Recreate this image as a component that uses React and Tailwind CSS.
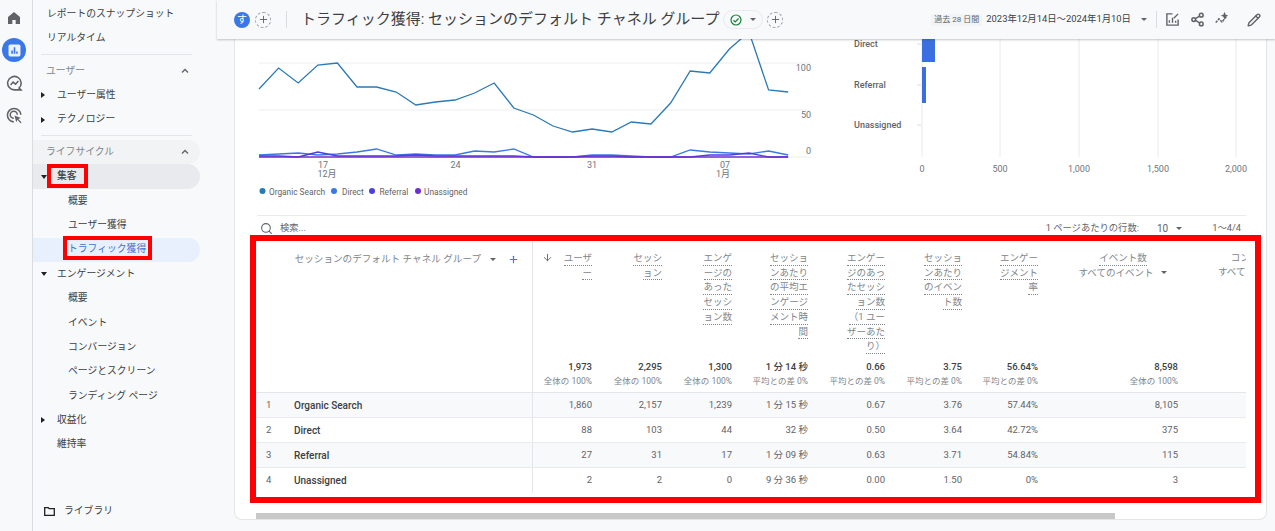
import React from 'react'
import { Share2, Pencil, Search, Plus, ArrowDown } from 'lucide-react'

const FONT = "font-['Roboto','Noto_Sans_CJK_JP',sans-serif]"

// daily values as y pixels, read off the screenshot; x steps are even
const toPoints = (ys) => ys.map((y, i) => `${(259 + 19.6 * i).toFixed(1)},${y}`).join(' ')
const ORGANIC = toPoints([89, 68, 83, 65, 63, 87, 87, 92, 105, 102, 100, 93, 83, 108, 115, 126, 132, 129, 132, 122, 124, 103, 71, 73, 49, 32, 90, 92])
const DIRECT = toPoints([155, 154, 153, 155, 154, 152, 149, 155, 154, 155, 155, 151, 152, 149, 157, 157, 157, 155, 155, 156, 157, 157, 150, 152, 153, 154, 151, 155])
const REFERRAL = toPoints([156, 156, 157, 152, 156, 156, 156, 156, 155, 156, 156, 156, 156, 156, 157, 157, 157, 156, 156, 157, 157, 157, 157, 155, 155, 153, 157, 157])

const COLUMNS = [
  { lines: ['ユーザ', 'ー'], total: '1,973', sub: '全体の 100%', sort: true },
  { lines: ['セッシ', 'ョン'], total: '2,295', sub: '全体の 100%' },
  { lines: ['エンゲ', 'ージの', 'あった', 'セッシ', 'ョン数'], total: '1,300', sub: '全体の 100%' },
  { lines: ['セッショ', 'ンあたり', 'の平均エ', 'ンゲージ', 'メント時', '間'], total: '1 分 14 秒', sub: '平均との差 0%' },
  { lines: ['エンゲー', 'ジのあっ', 'たセッシ', 'ョン数', '（1 ユー', 'ザーあた', 'り）'], total: '0.66', sub: '平均との差 0%' },
  { lines: ['セッショ', 'ンあたり', 'のイベン', 'ト数'], total: '3.75', sub: '平均との差 0%' },
  { lines: ['エンゲー', 'ジメント', '率'], total: '56.64%', sub: '平均との差 0%' },
]

const ROWS = [
  ['Organic Search', '1,860', '2,157', '1,239', '1 分 15 秒', '0.67', '3.76', '57.44%', '8,105'],
  ['Direct', '88', '103', '44', '32 秒', '0.50', '3.64', '42.72%', '375'],
  ['Referral', '27', '31', '17', '1 分 09 秒', '0.63', '3.71', '54.84%', '115'],
  ['Unassigned', '2', '2', '0', '9 分 36 秒', '0.00', '1.50', '0%', '3'],
]

const GRID = 'grid grid-cols-[277px_67px_70px_70px_76px_77px_77px_76px_140px_60px]'

function Caret({ className = '' }) {
  return <span className={`inline-block h-0 w-0 border-x-[3px] border-t-[3px] border-x-transparent border-t-[#5f6368] ${className}`} />
}

function Tri({ open }) {
  return open
    ? <span className="h-0 w-0 border-x-[3px] border-t-[4px] border-x-transparent border-t-[#202124]" />
    : <span className="h-0 w-0 border-y-[3px] border-l-[4px] border-y-transparent border-l-[#202124]" />
}

function NavRow({ label, indent = 'pl-[24px]', tri, className = '' }) {
  return (
    <div className={`relative flex h-[24.4px] items-center rounded-r-full text-[9.8px] text-[#3c4043] ${indent} ${className}`}>
      {tri && <span className="absolute left-[8px] flex"><Tri open={tri === 'open'} /></span>}
      {label}
    </div>
  )
}

function Section({ label, className = '' }) {
  return (
    <div className={`flex h-[24.4px] w-[167px] items-center justify-between rounded-r-full pl-[13px] pr-[10px] text-[9.8px] text-[#80868b] ${className}`}>
      {label}
      <svg width="10" height="10" viewBox="0 0 10 10" fill="none" stroke="#5f6368" strokeWidth="1.3"><path d="M2 6.5 5 3.5 8 6.5" /></svg>
    </div>
  )
}

function Sidebar() {
  return (
    <nav className="relative w-[184px] shrink-0 pt-[2px]">
      <NavRow label="レポートのスナップショット" indent="pl-[14px]" />
      <NavRow label="リアルタイム" indent="pl-[14px]" />
      <div className="mx-[8px] mt-[3px] mb-[4px] h-px w-[151px] bg-[#e3e5e8]" />
      <Section label="ユーザー" />
      <NavRow label="ユーザー属性" tri="closed" />
      <NavRow label="テクノロジー" tri="closed" />
      <div className="mx-[8px] mt-[3px] mb-[4px] h-px w-[151px] bg-[#e3e5e8]" />
      <Section label="ライフサイクル" className="bg-[#f1f3f4]" />
      <NavRow label="集客" tri="open" className="w-[167px] bg-[#e8eaed] font-medium" />
      <NavRow label="概要" indent="pl-[35px]" />
      <NavRow label="ユーザー獲得" indent="pl-[35px]" />
      <NavRow label="トラフィック獲得" indent="pl-[35px]" className="w-[167px] bg-[#e8f0fe] !text-[#4472c4]" />
      <NavRow label="エンゲージメント" tri="open" />
      <NavRow label="概要" indent="pl-[35px]" />
      <NavRow label="イベント" indent="pl-[35px]" />
      <NavRow label="コンバージョン" indent="pl-[35px]" />
      <NavRow label="ページとスクリーン" indent="pl-[35px]" />
      <NavRow label="ランディング ページ" indent="pl-[35px]" />
      <NavRow label="収益化" tri="closed" />
      <NavRow label="維持率" />
      <div className="mt-[47px] flex items-center gap-[9px] pl-[11px] text-[9.8px] text-[#3c4043]">
        <svg width="11" height="9" viewBox="0 0 11 9" fill="none" stroke="#202124" strokeWidth="1.3"><path d="M.7.7h3.5l1 1h5.1v6.6H.7z" /></svg>
        ライブラリ
      </div>
      {/* red annotation boxes */}
      <div className="absolute left-[14px] top-[164px] h-[24px] w-[41px] border-[4px] border-[#ff0000]" />
      <div className="absolute left-[30px] top-[236px] h-[24px] w-[89px] border-[4px] border-[#ff0000]" />
    </nav>
  )
}

function Rail() {
  return (
    <aside className="flex w-[33px] shrink-0 flex-col items-center border-r border-[#dadce0] pr-[4px] pt-[10px]">
      <svg width="16" height="16" viewBox="0 0 24 24" fill="#5f6368"><path d="M12 3 3 10.5V21h6.5v-6h5v6H21V10.5z" /></svg>
      <span className="mt-[12px] flex h-[24px] w-[24px] shrink-0 items-center justify-center rounded-full bg-[#3b78e7]">
        <svg width="13" height="13" viewBox="0 0 24 24" fill="none">
          <rect x="1" y="1" width="22" height="22" rx="3" fill="#fff" fillOpacity=".9" />
          <path d="M6 18v-6h3v6zm4.5 0V6h3v12zm4.5 0v-4h3v4z" fill="#3b78e7" />
        </svg>
      </span>
      <svg className="mt-[12.5px]" width="17" height="17" viewBox="0 0 24 24" fill="none" stroke="#5f6368" strokeWidth="2.2">
        <path d="M21 21l-2.6-2.6A9.5 9.5 0 1 0 12 21h9z" />
        <path d="M6.5 14l3.5-4 3.5 3 4-4.5" />
      </svg>
      <svg className="mt-[15px]" width="17" height="17" viewBox="0 0 24 24" fill="none" stroke="#5f6368" strokeWidth="2.2">
        <path d="M11 21a9.5 9.5 0 1 1 10-10" />
        <path d="M11 16a5 5 0 1 1 5-5" />
        <path d="M12 12l9 3.5-3.6 1.6L22 22l-1.5 1-4.3-5-1.8 3.5z" fill="#5f6368" stroke="none" />
      </svg>
    </aside>
  )
}

function Header() {
  return (
    <header className="relative z-10 flex h-[39px] shrink-0 items-center bg-[#f8f9fa] pl-[17px] pr-[14px] shadow-[0_1px_2px_rgba(60,64,67,0.3)]">
      <span className="flex h-[16px] w-[16px] items-center justify-center rounded-full bg-[#3b78e7] text-[10px] text-white">す</span>
      <span className="ml-[5px] flex h-[16px] w-[16px] items-center justify-center rounded-full border border-dashed border-[#9aa0a6]"><Plus size={11} color="#5f6368" /></span>
      <span className="ml-[15px] mr-[14px] h-[17px] w-px bg-[#dadce0]" />
      <h1 className="whitespace-nowrap text-[15px] font-normal text-[#3c4043]">トラフィック獲得: セッションのデフォルト チャネル グループ</h1>
      <span className="ml-[4px] flex h-[19px] w-[40px] items-center gap-[8px] rounded-full border border-[#e8eaed] pl-[6px]">
        <svg width="12" height="12" viewBox="0 0 24 24" fill="none" stroke="#188038" strokeWidth="2.4"><circle cx="12" cy="12" r="10" /><path d="M7 12.5l3.5 3.5 6.5-7" /></svg>
        <Caret />
      </span>
      <span className="ml-[4px] flex h-[16px] w-[16px] items-center justify-center rounded-full border border-dashed border-[#9aa0a6]"><Plus size={11} color="#5f6368" /></span>
      <span className="ml-auto bg-[#f1f3f4] px-[3px] text-[8px] text-[#5f6368]">過去 28 日間</span>
      <span className="ml-[4px] whitespace-nowrap text-[9.4px] text-[#3c4043]">2023年12月14日～2024年1月10日</span>
      <Caret className="ml-[10px]" />
      <span className="ml-[9px] mr-[8px] h-[17px] w-px bg-[#dadce0]" />
      <svg width="15" height="15" viewBox="0 0 24 24" fill="none" stroke="#5f6368" strokeWidth="2.2"><path d="M12 3H3v18h18v-9" /><path d="M14 10l7-7M7 17v-4M12 17V9M17 17v-3" /></svg>
      <Share2 className="ml-[10px]" size={15} strokeWidth={2.4} color="#5f6368" />
      <svg className="ml-[9px]" width="16" height="15" viewBox="0 0 24 24" fill="none" stroke="#5f6368" strokeWidth="2.4"><path d="M2 17l5-6 5 5 8-10" strokeDasharray="4 1.5" /><path d="M16 3l.8 2 2 .8-2 .8-.8 2-.8-2-2-.8 2-.8z" fill="#5f6368" /></svg>
      <Pencil className="ml-[17px]" size={14} strokeWidth={2.4} color="#5f6368" />
    </header>
  )
}

function LineChart() {
  const legend = [
    ['Organic Search', '#2b7ab5', 262.5, 269],
    ['Direct', '#3b78e7', 334, 342],
    ['Referral', '#4a3fe0', 372, 379.5],
    ['Unassigned', '#6f2fd0', 418, 424],
  ]
  return (
    <svg width="585" height="176" viewBox="235 39 585 176" className="block shrink-0">
      {[63, 110, 157].map((y) => <line key={y} x1="259" x2="811" y1={y} y2={y} stroke="#eceef0" />)}
      <polyline points={ORGANIC} fill="none" stroke="#2b7ab5" strokeWidth="1.3" />
      <polyline points={DIRECT} fill="none" stroke="#3b78e7" strokeWidth="1.3" />
      <polyline points={REFERRAL} fill="none" stroke="#4a3fe0" strokeWidth="1.3" />
      <line x1="259" x2="788" y1="157" y2="157" stroke="#6f2fd0" strokeWidth="1.6" />
      <g fontSize="9" fill="#70757a" textAnchor="middle">
        <text x="323" y="168">17</text><text x="327" y="177">12月</text>
        <text x="455.5" y="168">24</text>
        <text x="592" y="168">31</text>
        <text x="725" y="168">07</text><text x="723" y="177">1月</text>
      </g>
      <g fontSize="9" fill="#70757a" textAnchor="end">
        <text x="811" y="71">100</text><text x="811" y="118">50</text><text x="811" y="154">0</text>
      </g>
      {legend.map(([name, color, cx, tx]) => (
        <g key={name}>
          <circle cx={cx} cy="191" r="3" fill={color} />
          <text x={tx} y="194.5" fontSize="8.3" fill="#5f6368">{name}</text>
        </g>
      ))}
    </svg>
  )
}

function BarChart() {
  const labels = [['Direct', 47], ['Referral', 88], ['Unassigned', 128]]
  const ticks = [[922, '0'], [1000, '500'], [1079, '1,000'], [1158, '1,500'], [1236, '2,000']]
  return (
    <svg width="430" height="176" viewBox="820 39 430 176" className="block shrink-0">
      {ticks.map(([x, t]) => (
        <g key={t}>
          <line x1={x} x2={x} y1="39" y2="157" stroke="#e8eaed" />
          <text x={x} y="172" fontSize="9" fill="#70757a" textAnchor="middle">{t}</text>
        </g>
      ))}
      <rect x="922" y="39" width="13" height="23" fill="#3b6fe0" />
      <rect x="922" y="67" width="4" height="36" fill="#3b6fe0" />
      {labels.map(([t, y]) => (
        <g key={t}>
          <line x1="917" x2="921" y1={y - 3} y2={y - 3} stroke="#dadce0" />
          <text x="854" y={y} fontSize="9" fontWeight="500" fill="#5f6368">{t}</text>
        </g>
      ))}
    </svg>
  )
}

function ToolRow() {
  return (
    <div className="ml-[22px] flex h-[20px] w-[989px] items-center border-t border-[#e8eaed] pl-[3px] pt-[5px] text-[9.3px] text-[#5f6368]">
      <Search size={13} color="#5f6368" />
      <span className="ml-[7px]">検索...</span>
      <span className="ml-auto">1 ページあたりの行数:</span>
      <span className="ml-[18px] text-[10px]">10</span>
      <Caret className="ml-[8px]" />
      <span className="ml-[30px] mr-[5px]">1〜4/4</span>
    </div>
  )
}

function HeadCell({ col }) {
  return (
    <div className="flex flex-col justify-between pr-[8px] pt-[10px] pb-[4px] text-right">
      <div className="relative flex flex-col items-end text-[9.5px] leading-[13.7px] text-[#80868b]">
        {col.lines.map((line) => (
          <span key={line} className="whitespace-nowrap border-b border-dotted border-[#80868b]">{line}</span>
        ))}
        {col.sort && <ArrowDown className="absolute left-[9px] top-[1px]" size={11} color="#5f6368" />}
      </div>
      <div>
        <div className="text-[9.5px] font-medium leading-[15px] text-[#3c4043]">{col.total}</div>
        <div className="text-[8.5px] leading-[14px] text-[#80868b]">{col.sub}</div>
      </div>
    </div>
  )
}

function DataTable() {
  return (
    <div className="ml-[15px] w-[1011px] border-[6px] border-[#ff0000] bg-white">
      <div className="w-[990px] overflow-hidden pb-[4px]">
        <div className={`${GRID} h-[152px] border-b border-[#e3e5e8]`}>
          <div className="flex justify-end border-r border-[#e3e5e8] pt-[12px] pr-[13px] text-[9.6px] text-[#80868b]">
            <span className="flex h-[13px] items-center whitespace-nowrap">
              セッションのデフォルト チャネル グループ
              <Caret className="ml-[9px]" />
              <Plus className="ml-[12px]" size={11} strokeWidth={2.6} color="#3b78e7" />
            </span>
          </div>
          {COLUMNS.map((col) => <HeadCell key={col.total} col={col} />)}
          <div className="flex flex-col justify-between pr-[8px] pt-[10px] pb-[4px]">
            <div className="flex flex-col items-center pl-[22px] text-[9.5px] leading-[13.7px] text-[#80868b]">
              <span className="border-b border-dotted border-[#80868b]">イベント数</span>
              <span className="flex items-center whitespace-nowrap">すべてのイベント<Caret className="ml-[8px]" /></span>
            </div>
            <div className="text-right">
              <div className="text-[9.5px] font-medium leading-[15px] text-[#3c4043]">8,598</div>
              <div className="text-[8.5px] leading-[14px] text-[#80868b]">全体の 100%</div>
            </div>
          </div>
          <div className="overflow-hidden pt-[10px] pl-[32px] text-[9.5px] leading-[13.7px] text-[#80868b]">
            <div className="w-[92px] text-center whitespace-nowrap">コンバージョン</div>
            <div className="w-[92px] whitespace-nowrap">すべてのイベント</div>
          </div>
        </div>
        {ROWS.map(([name, ...cells], i) => (
          <div key={name} className={`${GRID} h-[25px] items-center border-b border-[#e8eaed] text-[9.5px] text-[#5f6368] last:border-b-0 ${i % 2 === 0 ? 'bg-[#f8f9fa]' : 'bg-white'}`}>
            <div className="flex h-full items-center border-r border-[#e3e5e8] pl-[10px]">
              <span className="w-[28px]">{i + 1}</span>
              <span className="text-[10px] font-medium text-[#3c4043]">{name}</span>
            </div>
            {cells.map((c, j) => <div key={j} className="pr-[8px] text-right">{c}</div>)}
            <div />
          </div>
        ))}
      </div>
    </div>
  )
}

export default function App() {
  return (
    <div className={`flex h-[531px] w-[1275px] overflow-hidden bg-[#f8f9fa] ${FONT}`}>
      <Rail />
      <Sidebar />
      <main className="flex min-w-0 flex-1 flex-col">
        <Header />
        <section className="ml-[17px] h-[481px] w-[1033px] rounded-b-lg border-x border-b border-[#e3e5e8] bg-white">
          <div className="flex">
            <LineChart />
            <BarChart />
          </div>
          <ToolRow />
          <DataTable />
          <div className="ml-[21px] mt-[10px] h-[6px] w-[859px] bg-[#c8c8c8]" />
        </section>
      </main>
    </div>
  )
}
